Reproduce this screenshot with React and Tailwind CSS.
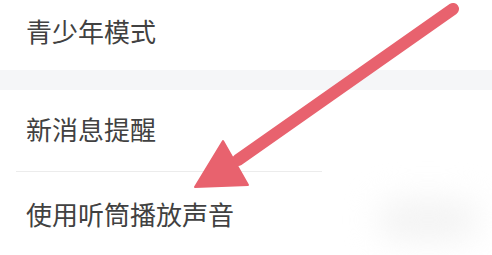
const ROWS = ['青少年模式', '新消息提醒', '使用听筒播放声音'];

function Arrow() {
  return (
    <svg className="absolute inset-0 pointer-events-none" width="492" height="255" viewBox="0 0 492 255">
      <line x1="453" y1="9" x2="238" y2="160" stroke="#e8626e" strokeWidth="12" strokeLinecap="round" />
      <polygon points="195,187 223,141 248,185" fill="#e8626e" stroke="#e8626e" strokeWidth="2" strokeLinejoin="round" />
    </svg>
  );
}

export default function App() {
  return (
    <div
      className="relative w-[492px] h-[255px] overflow-hidden bg-white text-[#414141]"
      style={{ fontFamily: '"Noto Sans CJK SC", "Noto Sans", sans-serif' }}
    >
      {/* settings list */}
      <div className="h-[70px] pl-[26px] pt-[18px] text-[26px] leading-[26px]">{ROWS[0]}</div>
      <div className="h-[20px] bg-[#f5f6f8]" />
      <div className="h-[81px] pl-[26px] pt-[26px] text-[26px] leading-[26px]">{ROWS[1]}</div>
      <div className="h-px ml-[16px] w-[306px] bg-[#ececec]" />
      <div className="h-[83px] pl-[26px] pt-[29px] text-[26px] leading-[26px]">{ROWS[2]}</div>

      {/* faint smudge bottom right */}
      <div className="absolute left-[378px] top-[200px] w-[100px] h-[40px] rounded-full bg-[#f3f3f3] blur-lg" />

      <Arrow />
    </div>
  );
}
